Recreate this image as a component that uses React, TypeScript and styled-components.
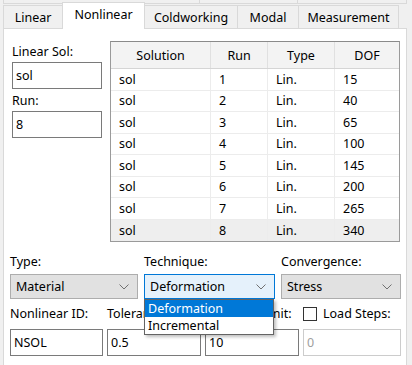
import React from 'react';
import styled, { createGlobalStyle } from 'styled-components';

const rows = [
  { run: 1, dof: 15 },
  { run: 2, dof: 40 },
  { run: 3, dof: 65 },
  { run: 4, dof: 100 },
  { run: 5, dof: 145 },
  { run: 6, dof: 200 },
  { run: 7, dof: 265 },
  { run: 8, dof: 340 },
];

const tabs = ['Linear', 'Nonlinear', 'Coldworking', 'Modal', 'Measurement'];
const tabWidths = [60, 83, 94, 62, 101];
const colWidths = [100, 57, 67, 64];

const Chevron: React.FC = () => (
  <svg width="10" height="6" viewBox="0 0 10 6">
    <polyline points="0.5,0.5 5,5 9.5,0.5" fill="none" stroke="#707070" strokeWidth="1" />
  </svg>
);

const App: React.FC = () => {
  return (
    <Window>
      <GlobalStyle />
      <TopStrip>
        <StripTab $w={195} />
        <StripTab $w={97} />
        <StripTab $w={108} />
      </TopStrip>
      <TabRow>
        {tabs.map((t, i) => (
          <Tab key={t} $w={tabWidths[i]} $active={i === 1}>
            {t}
          </Tab>
        ))}
      </TabRow>
      <Panel>
        <TopSection>
          <LeftCol>
            <Label>Linear Sol:</Label>
            <TextBox $w={90}>sol</TextBox>
            <Label>Run:</Label>
            <TextBox $w={90}>8</TextBox>
          </LeftCol>
          <Table>
            <HeaderRow>
              {['Solution', 'Run', 'Type', 'DOF'].map((h, i) => (
                <HeaderCell key={h} $w={colWidths[i]}>{h}</HeaderCell>
              ))}
            </HeaderRow>
            {rows.map((r) => (
              <Row key={r.run} $selected={r.run === 8}>
                <Cell $w={colWidths[0]}>sol</Cell>
                <Cell $w={colWidths[1]}>{r.run}</Cell>
                <Cell $w={colWidths[2]}>Lin.</Cell>
                <Cell $w={colWidths[3]}>{r.dof}</Cell>
              </Row>
            ))}
          </Table>
        </TopSection>

        <ComboGrid>
          <Label>Type:</Label>
          <Label>Technique:</Label>
          <Label>Convergence:</Label>
          <Combo>
            <span>Material</span>
            <Chevron />
          </Combo>
          <ComboWrap>
            <Combo $focused>
              <span>Deformation</span>
              <Chevron />
            </Combo>
            <Popup>
              <PopupItem $highlight>Deformation</PopupItem>
              <PopupItem>Incremental</PopupItem>
            </Popup>
          </ComboWrap>
          <Combo>
            <span>Stress</span>
            <Chevron />
          </Combo>
        </ComboGrid>

        <FieldGrid>
          <Label>Nonlinear ID:</Label>
          <Label>Tolerance:</Label>
          <Label>Iteration Limit:</Label>
          <CheckLabel>
            <CheckBox />
            Load Steps:
          </CheckLabel>
          <TextBox>NSOL</TextBox>
          <TextBox>0.5</TextBox>
          <TextBox>10</TextBox>
          <TextBox $disabled>0</TextBox>
        </FieldGrid>
      </Panel>
    </Window>
  );
};

const GlobalStyle = createGlobalStyle`
  html, body {
    margin: 0;
    padding: 0;
    background: #f0f0f0;
  }
  body {
    font-family: "Noto Sans", "Open Sans", sans-serif;
    font-size: 12.5px;
    color: #000;
  }
`;

const Window = styled.div`
  width: 412px;
  height: 365px;
  overflow: hidden;
  box-sizing: border-box;
  padding: 0 5px 0 3px;
  background: #f0f0f0;
`;

const TopStrip = styled.div`
  display: flex;
  height: 4px;
  overflow: hidden;
`;

const StripTab = styled.div<{ $w: number }>`
  width: ${(p) => p.$w}px;
  height: 3px;
  border: 1px solid #d9d9d9;
  border-top: none;
  margin-right: -1px;
`;

const TabRow = styled.div`
  display: flex;
  align-items: flex-end;
  height: 24px;
`;

const Tab = styled.div<{ $w: number; $active?: boolean }>`
  position: relative;
  box-sizing: border-box;
  width: ${(p) => p.$w}px;
  height: ${(p) => (p.$active ? 27 : 23)}px;
  margin-right: -1px;
  margin-bottom: ${(p) => (p.$active ? -1 : 0)}px;
  padding-bottom: ${(p) => (p.$active ? 4 : 0)}px;
  display: flex;
  align-items: center;
  justify-content: center;
  background: ${(p) => (p.$active ? '#ffffff' : '#f0f0f0')};
  border: 1px solid #d9d9d9;
  border-bottom: none;
  z-index: ${(p) => (p.$active ? 2 : 1)};
`;

const Panel = styled.div`
  box-sizing: border-box;
  height: 340px;
  background: #fff;
  border: 1px solid #d9d9d9;
  padding: 12px 0 0 6px;
`;

const TopSection = styled.div`
  display: flex;
  align-items: flex-start;
  gap: 8px;
`;

const LeftCol = styled.div`
  display: flex;
  flex-direction: column;
  gap: 3px;
  padding: 3px 0 0 2px;
`;

const Label = styled.div`
  line-height: 15px;
  height: 15px;
  white-space: nowrap;
  overflow: visible;
`;

const TextBox = styled.div<{ $w?: number; $disabled?: boolean }>`
  box-sizing: border-box;
  width: ${(p) => (p.$w ? `${p.$w}px` : '100%')};
  height: 27px;
  display: flex;
  align-items: center;
  padding-left: 3px;
  background: #fff;
  border: 1px solid ${(p) => (p.$disabled ? '#cccccc' : '#7a7a7a')};
  color: ${(p) => (p.$disabled ? '#a0a0a0' : '#000')};
  margin-bottom: 1px;
`;

const Table = styled.div`
  box-sizing: border-box;
  width: 290px;
  border: 1px solid #9a9a9a;
  border-top-color: #8a8a8a;
  display: flex;
  flex-direction: column;
`;

const HeaderRow = styled.div`
  display: flex;
  height: 26px;
  border-bottom: 1px solid #d5d5d5;
  background: #f3f3f3;
`;

const HeaderCell = styled.div<{ $w: number }>`
  box-sizing: border-box;
  width: ${(p) => p.$w}px;
  display: flex;
  align-items: center;
  justify-content: center;
  border-right: 1px solid #e0e0e0;
  &:last-child {
    border-right: none;
  }
`;

const Row = styled.div<{ $selected?: boolean }>`
  display: flex;
  box-sizing: border-box;
  height: 21.5px;
  border-bottom: 1px solid #ececec;
  background: ${(p) => (p.$selected ? '#eeeeee' : '#fff')};
  &:last-child {
    border-bottom: none;
  }
`;

const Cell = styled.div<{ $w: number }>`
  box-sizing: border-box;
  width: ${(p) => p.$w}px;
  display: flex;
  align-items: center;
  padding-left: 8px;
  border-right: 1px solid #ececec;
  &:last-child {
    border-right: none;
  }
`;

const ComboGrid = styled.div`
  display: grid;
  grid-template-columns: 128px 131px 120px;
  column-gap: 6px;
  row-gap: 5px;
  margin-top: 12px;
`;

const ComboWrap = styled.div`
  position: relative;
`;

const Combo = styled.div<{ $focused?: boolean }>`
  box-sizing: border-box;
  height: 25px;
  display: flex;
  align-items: center;
  justify-content: space-between;
  padding: 0 8px 0 5px;
  background: ${(p) => (p.$focused ? '#e5f1fb' : '#e1e1e1')};
  border: 1px solid ${(p) => (p.$focused ? '#0078d7' : '#adadad')};
`;

const Popup = styled.div`
  position: absolute;
  top: 100%;
  left: 0;
  width: 130px;
  box-sizing: border-box;
  background: #fff;
  border: 1px solid #646464;
  box-shadow: 2px 2px 3px rgba(0, 0, 0, 0.25);
  z-index: 5;
`;

const PopupItem = styled.div<{ $highlight?: boolean }>`
  height: 17px;
  line-height: 17px;
  padding-left: 3px;
  background: ${(p) => (p.$highlight ? '#0078d7' : '#fff')};
  color: ${(p) => (p.$highlight ? '#fff' : '#000')};
`;

const FieldGrid = styled.div`
  display: grid;
  grid-template-columns: 93px 94px 94px 98px;
  column-gap: 4px;
  row-gap: 8px;
  margin-top: 7px;
`;

const CheckLabel = styled.div`
  display: flex;
  align-items: center;
  gap: 6px;
  height: 15px;
  line-height: 15px;
  white-space: nowrap;
`;

const CheckBox = styled.span`
  box-sizing: border-box;
  width: 14px;
  height: 14px;
  border: 1px solid #333;
  background: #fff;
  flex-shrink: 0;
`;

export default App;
